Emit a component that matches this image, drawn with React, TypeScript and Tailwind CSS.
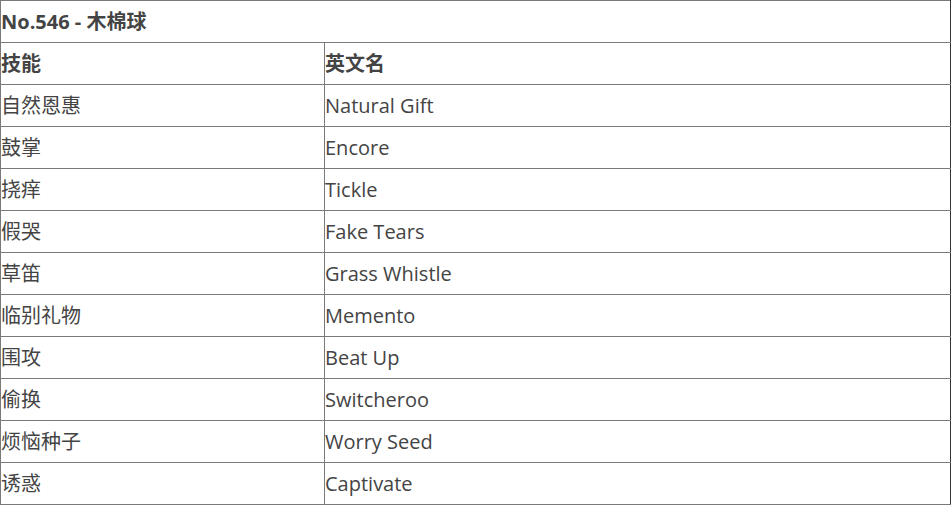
const skills: [string, string][] = [
  ["自然恩惠", "Natural Gift"],
  ["鼓掌", "Encore"],
  ["挠痒", "Tickle"],
  ["假哭", "Fake Tears"],
  ["草笛", "Grass Whistle"],
  ["临别礼物", "Memento"],
  ["围攻", "Beat Up"],
  ["偷换", "Switcheroo"],
  ["烦恼种子", "Worry Seed"],
  ["诱惑", "Captivate"],
];

const font = { fontFamily: '"Open Sans", "Noto Sans CJK SC", sans-serif' };

export default function App() {
  return (
    <div className="w-[951px] bg-white text-[#444]" style={font}>
      <table className="w-full border-collapse border-l border-t border-r border-[#7a7a7a] border-r-[#333] text-[20px]">
        <tbody>
          <tr className="h-[42px] border-b border-[#7a7a7a]">
            <td colSpan={2} className="p-0 font-bold leading-none">
              No.546 - 木棉球
            </td>
          </tr>
          <tr className="h-[42px] border-b border-[#7a7a7a] font-bold">
            <td className="w-[324px] p-0 leading-none">技能</td>
            <td className="border-l border-[#7a7a7a] p-0 leading-none">英文名</td>
          </tr>
          {skills.map(([zh, en]) => (
            <tr key={en} className="h-[42px] border-b border-[#7a7a7a]">
              <td className="w-[324px] p-0 leading-none">{zh}</td>
              <td className="border-l border-[#7a7a7a] p-0 leading-none">{en}</td>
            </tr>
          ))}
        </tbody>
      </table>
    </div>
  );
}
